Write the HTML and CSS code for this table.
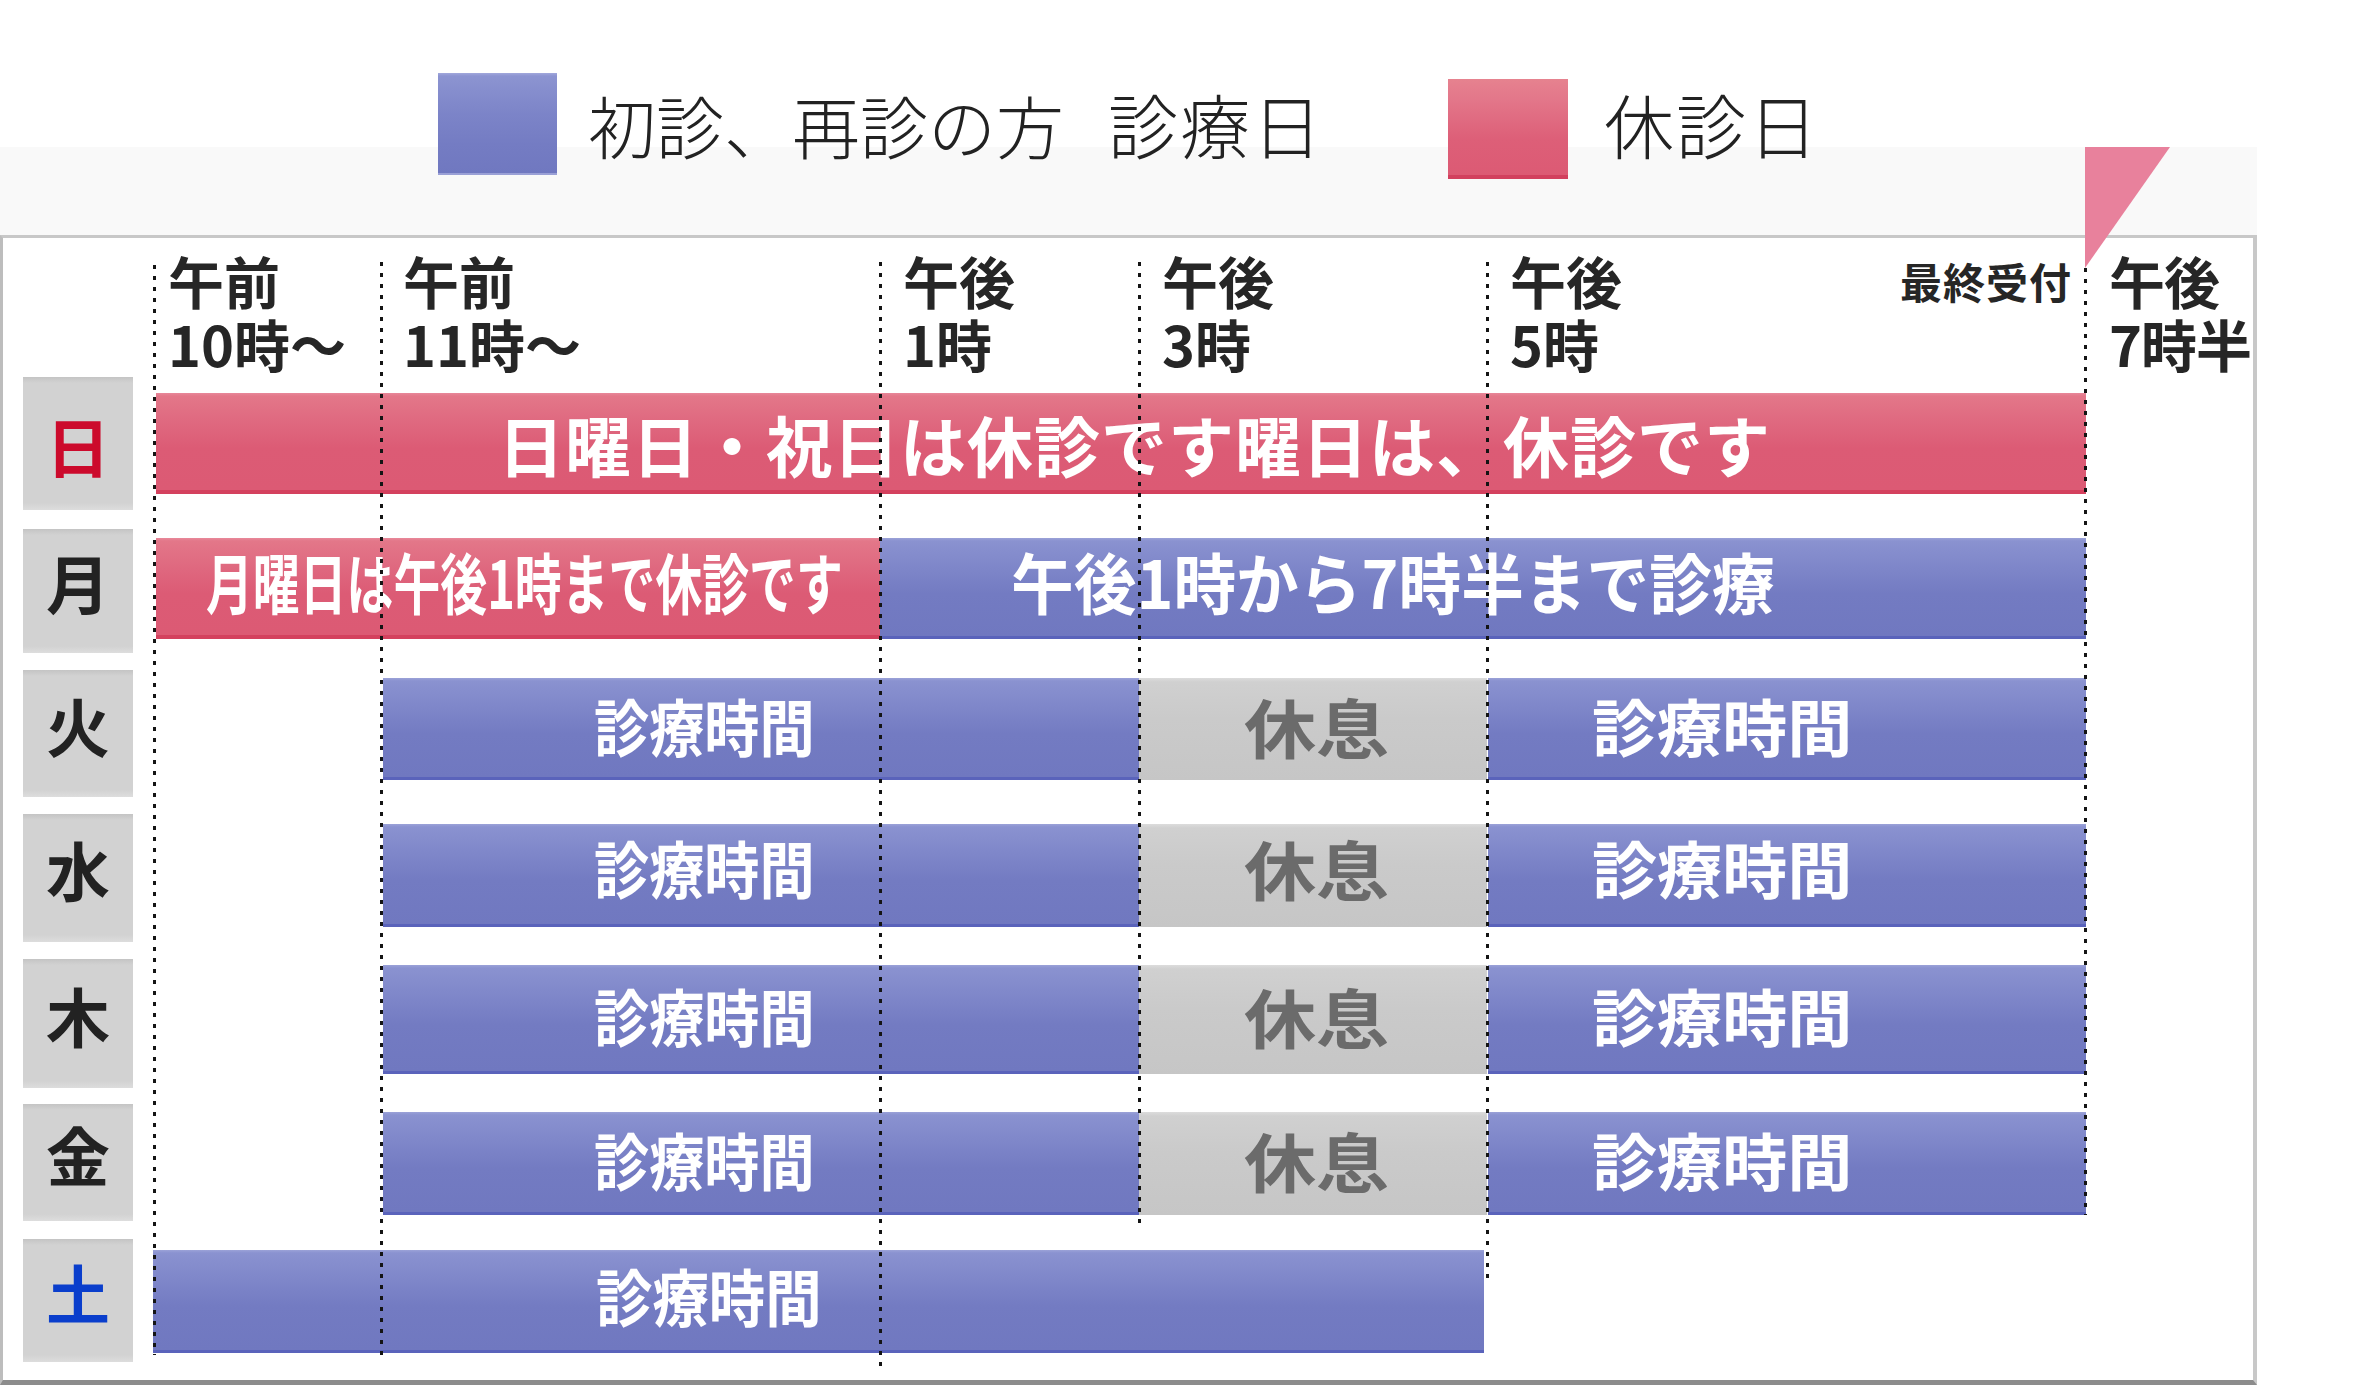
FILE: index.html
```html
<!DOCTYPE html>
<html lang="ja">
<head>
<meta charset="utf-8">
<title>診療時間</title>
<link rel="stylesheet" href="styles.css">
</head>
<body>
<div class="page">
  <div class="top">
    <div class="legend">
      <div class="legend-item item-open">
        <span class="swatch swatch-blue"></span>
        <span class="legend-text">初診、再診の方<span class="legend-gap">診療日</span></span>
      </div>
      <div class="legend-item item-closed">
        <span class="swatch swatch-pink"></span>
        <span class="legend-text legend-text-closed">休診日</span>
      </div>
    </div>
  </div>

  <svg class="last-mark" width="85" height="121" viewBox="0 0 85 121" aria-hidden="true">
    <polygon points="0,0 85,0 0,121" fill="#e8819c"/>
  </svg>

  <div class="table">
    <div class="row head">
      <div class="hcell c-t1 first">午前<br>10時〜</div>
      <div class="hcell c-t2">午前<br>11時〜</div>
      <div class="hcell c-t3">午後<br>1時</div>
      <div class="hcell c-t4">午後<br>3時</div>
      <div class="hcell c-t5 split"><span>午後<br>5時</span><span class="last-call">最終受付</span></div>
      <div class="hcell c-t6">午後<br>7時半</div>
    </div>

    <div class="row r-sun">
      <div class="day day-sun">日</div>
      <div class="bar pink span-all"><span class="txt t-sun">日曜日・祝日は休診です曜日は、休診です</span></div>
    </div>

    <div class="row r-mon">
      <div class="day">月</div>
      <div class="bar pink span-am"><span class="txt t-mon-off">月曜日は午後1時まで休診です</span></div>
      <div class="bar blue span-pm"><span class="txt t-mon-on">午後1時から7時半まで診療</span></div>
    </div>

    <div class="row r-tue">
      <div class="day">火</div>
      <div class="bar blue span-morning"><span class="txt t-left">診療時間</span></div>
      <div class="bar gray span-break"><span class="txt t-break">休息</span></div>
      <div class="bar blue span-evening"><span class="txt t-right">診療時間</span></div>
    </div>

    <div class="row r-wed">
      <div class="day">水</div>
      <div class="bar blue span-morning"><span class="txt t-left">診療時間</span></div>
      <div class="bar gray span-break"><span class="txt t-break">休息</span></div>
      <div class="bar blue span-evening"><span class="txt t-right">診療時間</span></div>
    </div>

    <div class="row r-thu">
      <div class="day">木</div>
      <div class="bar blue span-morning"><span class="txt t-left">診療時間</span></div>
      <div class="bar gray span-break"><span class="txt t-break">休息</span></div>
      <div class="bar blue span-evening"><span class="txt t-right">診療時間</span></div>
    </div>

    <div class="row r-fri">
      <div class="day">金</div>
      <div class="bar blue span-morning"><span class="txt t-left">診療時間</span></div>
      <div class="bar gray span-break"><span class="txt t-break">休息</span></div>
      <div class="bar blue span-evening"><span class="txt t-right">診療時間</span></div>
    </div>

    <div class="row r-sat">
      <div class="day day-sat">土</div>
      <div class="bar blue span-sat"><span class="txt t-sat">診療時間</span></div>
    </div>

    <div class="guides" aria-hidden="true">
      <span class="guide g1"></span>
      <span class="guide g2"></span>
      <span class="guide g3"></span>
      <span class="guide g4"></span>
      <span class="guide g5"></span>
      <span class="guide g6"></span>
    </div>
  </div>
</div>
</body>
</html>
```

FILE: styles.css
```css
html, body {
  margin: 0;
  padding: 0;
  background: #ffffff;
}

body {
  font-family: "Noto Sans CJK JP", "Noto Sans", sans-serif;
  color: #222222;
}

.page {
  position: relative;
  width: 2257px;
}

/* ---------- legend ---------- */
.top {
  height: 235px;
  background: linear-gradient(to bottom, #ffffff 0, #ffffff 147px, #f9f9f9 147px, #f9f9f9 100%);
}

.legend {
  display: flex;
  align-items: flex-start;
  padding-left: 438px;
  padding-top: 73px;
}

.legend-item {
  display: flex;
  align-items: flex-start;
}

.item-open {
  width: 1010px;
}

.swatch {
  display: block;
  flex: none;
}

.swatch-blue {
  width: 119px;
  height: 102px;
  background: linear-gradient(to bottom, #a2a8dc 0, #8c94d1 3px, #7c84c8 40%, #747cc3 70%, #7078c0 calc(100% - 2px), #9aa0d6 calc(100% - 2px));
}

.swatch-pink {
  width: 120px;
  height: 100px;
  margin-top: 6px;
  background: linear-gradient(to bottom, #e6828f 0, #e3778a 20%, #dd5f78 60%, #dc5a74 calc(100% - 4px), #d2405e calc(100% - 4px));
}

.legend-text {
  margin-left: 31px;
  font-size: 68px;
  font-weight: 300;
  line-height: 102px;
  color: #222222;
  white-space: nowrap;
}

.legend-text-closed {
  margin-left: 36px;
  font-size: 70px;
  letter-spacing: 2px;
}

.legend-gap {
  margin-left: 44px;
  font-size: 70px;
  letter-spacing: 2px;
}

/* ---------- last reception marker ---------- */
.last-mark {
  position: absolute;
  left: 2085px;
  top: 147px;
  z-index: 3;
  display: block;
}

/* ---------- table ---------- */
.table {
  position: relative;
  box-sizing: border-box;
  height: 1150px;
  border-top: 3px solid #c8c8c8;
  border-left: 3px solid #bdbdbd;
  border-right: 4px solid #c8c8c8;
  border-bottom: 5px solid #8c8c8c;
  background: #ffffff;
}

.row {
  display: grid;
  grid-template-columns: 110px 20px 227px 500px 259px 348px 599px 1fr;
  padding-left: 20px;
  align-items: start;
}

/* header */
.head {
  padding-top: 10px;
  height: 136px;
  box-sizing: border-box;
}

.hcell {
  font-size: 56px;
  font-weight: 700;
  line-height: 63px;
  color: #262626;
  white-space: nowrap;
  padding-left: 23px;
}

.hcell.first {
  padding-left: 15px;
}

.c-t1 { grid-column: 3 / 4; }
.c-t2 { grid-column: 4 / 5; }
.c-t3 { grid-column: 5 / 6; }
.c-t4 { grid-column: 6 / 7; }
.c-t5 { grid-column: 7 / 8; }
.c-t6 { grid-column: 8 / 9; letter-spacing: -1px; }

.split {
  display: flex;
  justify-content: space-between;
  align-items: flex-start;
  padding-right: 14px;
}

.last-call {
  font-size: 42px;
  line-height: 42px;
  margin-top: 12px;
  letter-spacing: 1px;
}

/* day label */
.day {
  grid-column: 1 / 2;
  height: 100%;
  box-sizing: border-box;
  padding-bottom: 20px;
  display: flex;
  align-items: center;
  justify-content: center;
  font-size: 64px;
  font-weight: 700;
  line-height: 1;
  color: #222222;
  background: linear-gradient(to bottom, #c4c4c4 0, #d2d2d2 6px, #d2d2d2 calc(100% - 7px), #dddddd 100%);
}

.day-sun {
  color: #cc0a2c;
  padding-bottom: 0;
}

.day-sat { color: #0a3ecc; }

/* rows */
.r-sun { height: 133px; margin-top: 3px; }
.r-mon { height: 124px; margin-top: 19px; }
.r-tue { height: 127px; margin-top: 17px; }
.r-wed { height: 128px; margin-top: 17px; }
.r-thu { height: 129px; margin-top: 17px; }
.r-fri { height: 117px; margin-top: 16px; }
.r-sat { height: 123px; margin-top: 18px; }

/* bars */
.bar {
  height: 102px;
  display: flex;
  align-items: center;
  box-sizing: border-box;
  padding-bottom: 12px;
  white-space: nowrap;
}

.r-sun .bar { height: 101px; margin-top: 16px; padding-bottom: 2px; }
.r-mon .bar { height: 101px; margin-top: 9px; padding-bottom: 18px; }
.r-tue .bar { height: 102px; margin-top: 8px; padding-bottom: 8px; }
.r-wed .bar { height: 103px; margin-top: 10px; padding-bottom: 18px; }
.r-thu .bar { height: 109px; margin-top: 6px; padding-bottom: 10px; }
.r-fri .bar { height: 103px; margin-top: 8px; padding-bottom: 10px; }
.r-sat .bar { height: 103px; margin-top: 11px; padding-bottom: 14px; }

.blue {
  background: linear-gradient(to bottom, #9ba2d8 0, #8a92d0 3px, #7e86c9 30%, #737bc2 55%, #7078c0 calc(100% - 3px), #5a63bb calc(100% - 3px));
}

.pink {
  background: linear-gradient(to bottom, #e8889a 0, #e37789 3px, #df687f 30%, #dc5b75 55%, #dc5a74 calc(100% - 4px), #d4415e calc(100% - 4px));
}

.gray {
  background: linear-gradient(to bottom, #dcdcdc 0, #d0d0d0 4px, #cacaca 40%, #c6c6c6 100%);
}

.span-all { grid-column: 3 / 8; margin-left: 3px; }
.span-am { grid-column: 3 / 5; margin-left: 3px; }
.span-pm { grid-column: 5 / 8; }
.span-morning { grid-column: 4 / 6; margin-left: 3px; }
.span-break { grid-column: 6 / 7; }
.span-evening { grid-column: 7 / 8; margin-left: 1px; }
.span-sat { grid-column: 3 / 7; margin-right: 3px; }

.txt {
  display: inline-block;
  font-weight: 700;
  line-height: 1;
  color: #ffffff;
  transform-origin: left center;
}

.t-sun {
  font-size: 66px;
  margin-left: 342px;
  letter-spacing: 1px;
}

.t-mon-off {
  font-size: 66px;
  margin-left: 50px;
  transform: scaleX(0.71);
}

.t-mon-on {
  font-size: 66px;
  margin-left: 131px;
  transform: scaleX(0.95);
}

.t-left {
  font-size: 62px;
  margin-left: 211px;
  transform: scaleX(0.89);
}

.t-right {
  font-size: 62px;
  margin-left: 104px;
  transform: scaleX(1.05);
}

.t-break {
  font-size: 64px;
  margin-left: 105px;
  color: #6b6b6b;
  transform: scaleX(1.13);
}

.t-sat {
  font-size: 62px;
  margin-left: 443px;
  transform: scaleX(0.91);
}

/* dashed guide lines */
.guides {
  position: absolute;
  inset: 0;
  pointer-events: none;
  z-index: 2;
}

.guide {
  position: absolute;
  width: 3px;
  background: repeating-linear-gradient(to bottom, #141414 0, #141414 4px, transparent 4px, transparent 11px);
}

.g1 { left: 150px; top: 27px; height: 1090px; }
.g2 { left: 377px; top: 24px; height: 1095px; }
.g3 { left: 876px; top: 24px; height: 1105px; }
.g4 { left: 1135px; top: 24px; height: 965px; }
.g5 { left: 1483px; top: 24px; height: 1020px; }
.g6 { left: 2081px; top: 30px; height: 947px; }
```
